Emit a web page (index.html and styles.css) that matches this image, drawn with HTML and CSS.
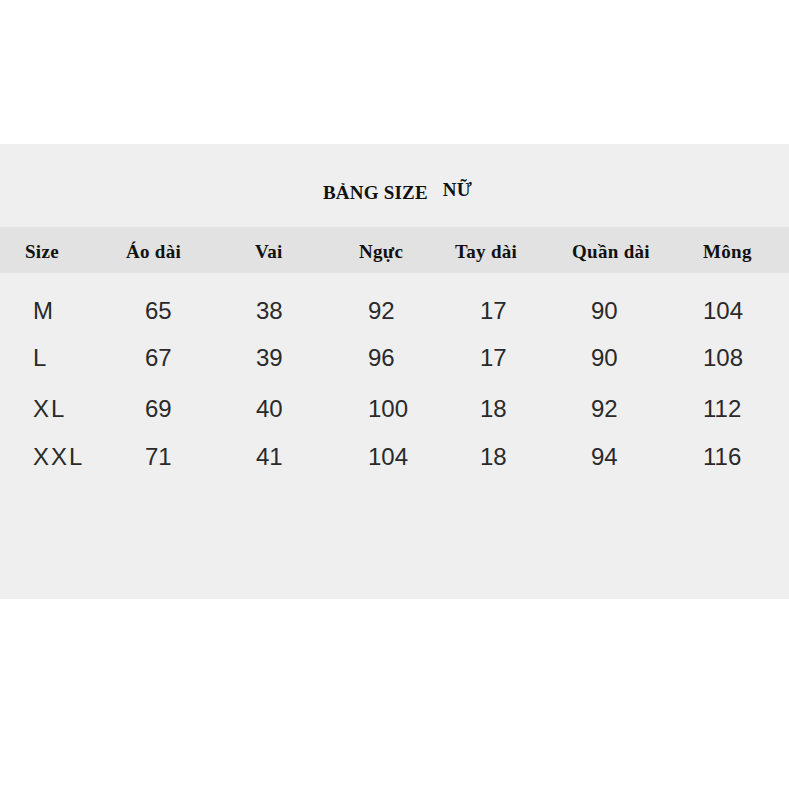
FILE: index.html
```html
<!DOCTYPE html>
<html lang="vi">
<head>
<meta charset="utf-8">
<title>Bảng size nữ</title>
<link rel="stylesheet" href="styles.css">
</head>
<body>
<div class="top-space"></div>
<section class="panel">
  <div class="title"><span class="title-main">BẢNG SIZE</span><span class="title-sub">NỮ</span></div>
  <div class="head-row">
    <span>Size</span><span>Áo dài</span><span>Vai</span><span>Ngực</span><span>Tay dài</span><span>Quần dài</span><span>Mông</span>
  </div>
  <div class="rows">
    <div class="row r1"><span class="sz">M</span><span>65</span><span>38</span><span>92</span><span>17</span><span>90</span><span>104</span></div>
    <div class="row r2"><span class="sz">L</span><span>67</span><span>39</span><span>96</span><span>17</span><span>90</span><span>108</span></div>
    <div class="row r3"><span class="sz">XL</span><span>69</span><span>40</span><span>100</span><span>18</span><span>92</span><span>112</span></div>
    <div class="row r4"><span class="sz">XXL</span><span>71</span><span>41</span><span>104</span><span>18</span><span>94</span><span>116</span></div>
  </div>
</section>
</body>
</html>
```
FILE: styles.css
```css
html, body {
  margin: 0;
  padding: 0;
  background: #ffffff;
}
.top-space {
  height: 144px;
}
.panel {
  height: 455px;
  background: #efefef;
  box-sizing: border-box;
}
.title {
  display: flex;
  align-items: flex-start;
  padding: 38px 0 0 323px;
  height: 83px;
  box-sizing: border-box;
  font-family: "Liberation Serif", serif;
  font-weight: bold;
  font-size: 19px;
  line-height: 22px;
  letter-spacing: 0.2px;
  color: #111;
}
.title-sub {
  margin-left: 15px;
  position: relative;
  top: -3px;
}
.head-row {
  display: grid;
  grid-template-columns: 101px 129px 104px 96px 117px 131px 1fr;
  padding: 4px 0 0 25px;
  height: 46px;
  box-sizing: border-box;
  background: #e2e2e2;
  font-family: "Liberation Serif", serif;
  font-weight: bold;
  font-size: 19px;
  line-height: 42px;
  letter-spacing: 0.3px;
  color: #111;
}
.rows {
  padding: 14px 0 0 33px;
  font-family: "Liberation Sans", Arial, sans-serif;
  font-size: 24px;
  color: #2a2a2a;
}
.row {
  display: grid;
  grid-template-columns: 112px 111px 112px 112px 111px 112px 1fr;
  height: 48px;
  line-height: 48px;
}
.sz {
  letter-spacing: 2px;
}
.row.r2 { height: 50px; line-height: 46px; }
.row.r3 { height: 48px; line-height: 48px; }
.row.r4 { line-height: 47px; }
```
